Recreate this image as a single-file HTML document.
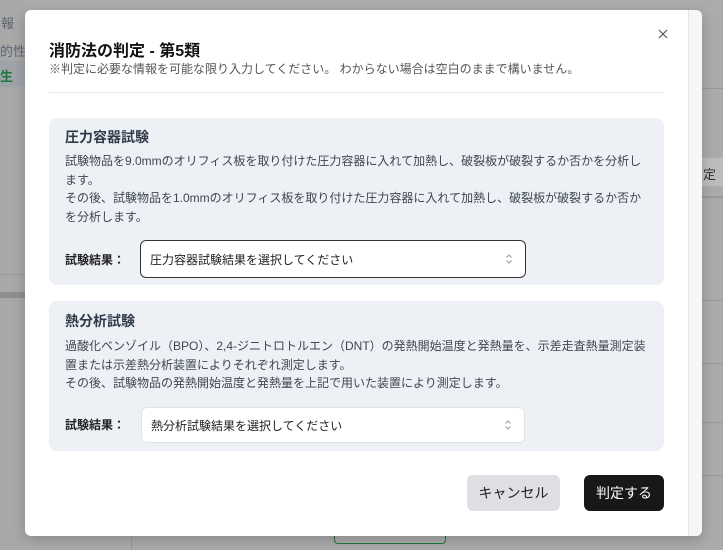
<!DOCTYPE html>
<html><head><meta charset="utf-8"><style>
*{box-sizing:border-box;margin:0;padding:0}
body{width:723px;height:550px;overflow:hidden;background:#ababab;font-family:"Liberation Sans","Noto Sans CJK JP",sans-serif;position:relative}
.bg{position:absolute}
.modal{position:absolute;left:25px;top:10px;width:677px;height:526px;background:#fff;border-radius:6px;box-shadow:0 4px 12px rgba(0,0,0,.2);overflow:hidden}
.sb{position:absolute;left:663px;top:0;width:14px;height:100%;background:#f7f7f7;border-left:1px solid #e6e6e6}
.t{position:absolute;white-space:nowrap}
.sec{position:absolute;left:24px;width:615px;background:#edf1f6;border-radius:8px}
.h{font-size:14px;font-weight:bold;color:#303a48}
.p{font-size:12px;color:#3f4650;line-height:18.7px}
.lbl{font-size:12px;font-weight:bold;color:#222}
.sel{position:absolute;background:#fff;border-radius:6px;font-size:12px;color:#222;padding-left:9px;display:flex;align-items:center}
.arr{position:absolute;right:12px;top:50%;transform:translateY(-50%)}
.btn{position:absolute;top:465px;height:36px;border-radius:6px;font-size:14px;display:flex;align-items:center;justify-content:center}
</style></head><body>
<div class="bg" style="left:0;top:0;width:25px;height:550px;background:#a8a8a8"></div>
<div class="t" style="left:1px;top:13px;font-size:13px;color:#5d6470">報</div>
<div class="t" style="left:0;top:41px;font-size:13px;color:#5d6470">的性</div>
<div class="bg" style="left:0;top:61px;width:25px;height:26px;background:#9ea3a8"></div>
<div class="t" style="left:0;top:66px;font-size:13px;color:#1a7a3a;font-weight:bold">生</div>
<div class="bg" style="left:0;top:274px;width:25px;height:1px;background:#999"></div>
<div class="bg" style="left:0;top:292px;width:25px;height:6px;background:#8e8e8e"></div>
<div class="bg" style="left:702px;top:88px;width:21px;height:1px;background:#999"></div>
<div class="bg" style="left:702px;top:158px;width:21px;height:28px;background:#bcbcbc"></div>
<div class="t" style="left:703px;top:164px;font-size:13px;color:#333">定</div>
<div class="bg" style="left:702px;top:196px;width:21px;height:2px;background:#999"></div>
<div class="bg" style="left:702px;top:300px;width:21px;height:1px;background:#999"></div>
<div class="bg" style="left:702px;top:363px;width:21px;height:1px;background:#999"></div>
<div class="bg" style="left:702px;top:422px;width:21px;height:1px;background:#999"></div>
<div class="bg" style="left:702px;top:475px;width:21px;height:1px;background:#999"></div>
<div class="bg" style="left:131px;top:536px;width:1px;height:14px;background:#999"></div>
<div class="bg" style="left:334px;top:536px;width:112px;height:8px;border:1px solid #1a7a3a;border-top:none;border-radius:0 0 4px 4px"></div>

<div class="modal">
<div class="sb"></div>
<div class="t" style="left:24px;top:27px;font-size:16px;font-weight:bold;color:#111">消防法の判定 - 第5類</div>
<div class="t" style="left:24px;top:50px;font-size:12px;color:#555">※判定に必要な情報を可能な限り入力してください。 わからない場合は空白のままで構いません。</div>
<svg class="bg" style="left:633px;top:19px" width="10" height="10" viewBox="0 0 10 10"><path d="M1 1L9 9M9 1L1 9" stroke="#555" stroke-width="1.2"/></svg>
<div class="bg" style="left:24px;top:82px;width:615px;height:1px;background:#e5e7eb"></div>

<div class="sec" style="top:108px;height:167px">
<div class="t h" style="left:16px;top:9px">圧力容器試験</div>
<div class="t p" style="left:16px;top:34px">試験物品を9.0mmのオリフィス板を取り付けた圧力容器に入れて加熱し、破裂板が破裂するか否かを分析し<br>ます。<br>その後、試験物品を1.0mmのオリフィス板を取り付けた圧力容器に入れて加熱し、破裂板が破裂するか否か<br>を分析します。</div>
<div class="t lbl" style="left:16px;top:133px">試験結果：</div>
<div class="sel" style="left:91px;top:122px;width:386px;height:38px;border:1.5px solid #333">圧力容器試験結果を選択してください<svg class="arr" width="8" height="12" viewBox="0 0 8 12"><path d="M1.5 4.5L4 2L6.5 4.5M1.5 7.5L4 10L6.5 7.5" fill="none" stroke="#999" stroke-width="1"/></svg></div>
</div>

<div class="sec" style="top:291px;height:150px">
<div class="t h" style="left:16px;top:10px">熱分析試験</div>
<div class="t p" style="left:16px;top:36px">過酸化ベンゾイル（BPO）、2,4-ジニトロトルエン（DNT）の発熱開始温度と発熱量を、示差走査熱量測定装<br>置または示差熱分析装置によりそれぞれ測定します。<br>その後、試験物品の発熱開始温度と発熱量を上記で用いた装置により測定します。</div>
<div class="t lbl" style="left:16px;top:115px">試験結果：</div>
<div class="sel" style="left:92px;top:106px;width:384px;height:36px;border:1px solid #dfe3e8">熱分析試験結果を選択してください<svg class="arr" width="8" height="12" viewBox="0 0 8 12"><path d="M1.5 4.5L4 2L6.5 4.5M1.5 7.5L4 10L6.5 7.5" fill="none" stroke="#999" stroke-width="1"/></svg></div>
</div>

<div class="btn" style="left:442px;width:93px;background:#dedfe2;color:#222">キャンセル</div>
<div class="btn" style="left:559px;width:80px;background:#18181b;color:#fff">判定する</div>
</div>
</body></html>
